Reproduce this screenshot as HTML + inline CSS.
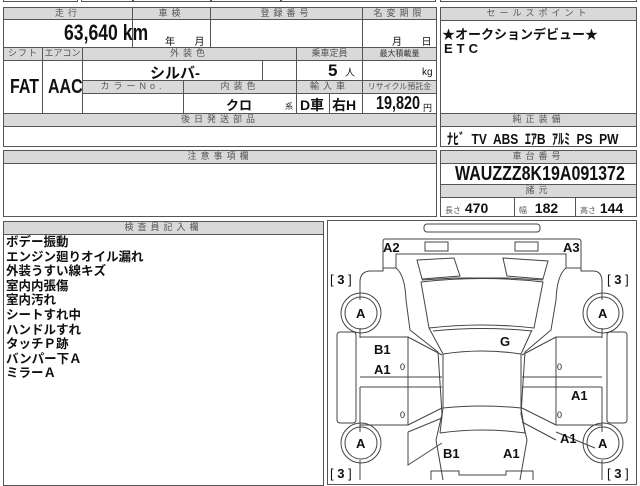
<!DOCTYPE html>
<html><head><meta charset="utf-8"><style>
*{margin:0;padding:0;box-sizing:border-box}
body{width:640px;height:480px;background:#fff;position:relative;overflow:hidden;font-family:"Liberation Sans","Noto Sans CJK JP",sans-serif;color:#111}
.b{position:absolute;border:1px solid #555;background:#fff}
.h{position:absolute;background:#d9d9d9;border:1px solid #555;font-size:9px;color:#555;text-align:center;letter-spacing:4px;line-height:11px;white-space:nowrap;overflow:hidden}
.t{position:absolute;white-space:nowrap;font-weight:bold}
.n{display:inline-block;transform:scaleX(.8);transform-origin:left}
</style></head><body>
<div class="b" style="left:3px;top:-6px;width:75px;height:8px"></div>
<div class="b" style="left:81px;top:-6px;width:52px;height:8px"></div>
<div class="b" style="left:133px;top:-6px;width:78px;height:8px"></div>
<div class="b" style="left:211px;top:-6px;width:70px;height:8px"></div>
<div class="b" style="left:281px;top:-6px;width:155px;height:8px"></div>
<div class="b" style="left:440px;top:-6px;width:197px;height:8px"></div>

<div class="b" style="left:3px;top:7px;width:434px;height:140px"></div>
<div class="h" style="left:3px;top:7px;width:130px;height:13px">走行</div>
<div class="h" style="left:132px;top:7px;width:79px;height:13px">車検</div>
<div class="h" style="left:210px;top:7px;width:153px;height:13px">登録番号</div>
<div class="h" style="left:362px;top:7px;width:75px;height:13px">名変期限</div>
<div class="b" style="left:132px;top:19px;width:79px;height:29px;background:none"></div>
<div class="b" style="left:210px;top:19px;width:153px;height:29px;background:none"></div>
<div class="t" style="left:64px;top:20px;font-size:22px"><span class="n">63,640 km</span></div>
<div class="t" style="left:165px;top:33px;font-size:10px;font-weight:normal">年&nbsp;&nbsp;&nbsp;&nbsp;&nbsp;&nbsp;&nbsp;月</div>
<div class="t" style="left:392px;top:33px;font-size:10px;font-weight:normal">月&nbsp;&nbsp;&nbsp;&nbsp;&nbsp;&nbsp;&nbsp;日</div>

<div class="h" style="left:3px;top:47px;width:40px;height:14px;letter-spacing:1px">シフト</div>
<div class="h" style="left:42px;top:47px;width:41px;height:14px;letter-spacing:0">エアコン</div>
<div class="h" style="left:82px;top:47px;width:215px;height:14px">外装色</div>
<div class="h" style="left:296px;top:47px;width:67px;height:14px;letter-spacing:0">乗車定員</div>
<div class="h" style="left:362px;top:47px;width:75px;height:14px;letter-spacing:0;font-size:8px;color:#333">最大積載量</div>
<div class="b" style="left:3px;top:60px;width:40px;height:54px;background:none"></div>
<div class="b" style="left:42px;top:60px;width:41px;height:54px;background:none"></div>
<div class="t" style="left:10px;top:76px;font-size:20px"><span class="n">FAT</span></div>
<div class="t" style="left:48px;top:76px;font-size:20px"><span class="n">AAC</span></div>
<div class="b" style="left:262px;top:60px;width:35px;height:21px;background:none"></div>
<div class="b" style="left:296px;top:60px;width:67px;height:21px;background:none"></div>
<div class="t" style="left:150px;top:62px;font-size:15px">シルバ-</div>
<div class="t" style="left:328px;top:61px;font-size:17px">5 <span style="font-size:10px;font-weight:normal">&nbsp;人</span></div>
<div class="t" style="left:422px;top:67px;font-size:10px;font-weight:normal">kg</div>
<div class="h" style="left:82px;top:80px;width:102px;height:14px">カラーNo.</div>
<div class="h" style="left:183px;top:80px;width:114px;height:14px">内装色</div>
<div class="h" style="left:296px;top:80px;width:67px;height:14px">輸入車</div>
<div class="h" style="left:362px;top:80px;width:75px;height:14px;letter-spacing:0;font-size:8px">リサイクル預託金</div>
<div class="b" style="left:82px;top:93px;width:102px;height:21px;background:none"></div>
<div class="b" style="left:296px;top:93px;width:34px;height:21px;background:none"></div>
<div class="b" style="left:329px;top:93px;width:34px;height:21px;background:none"></div>
<div class="t" style="left:226px;top:95px;font-size:13px">クロ</div>
<div class="t" style="left:285px;top:101px;font-size:8px;font-weight:normal">系</div>
<div class="t" style="left:300px;top:95px;font-size:14px">D車</div>
<div class="t" style="left:332px;top:95px;font-size:14px">右H</div>
<div class="t" style="left:376px;top:93px;font-size:18px"><span class="n">19,820</span></div>
<div class="t" style="left:423px;top:101px;font-size:9px;font-weight:normal">円</div>
<div class="h" style="left:3px;top:113px;width:434px;height:14px">後日発送部品</div>

<div class="b" style="left:440px;top:7px;width:197px;height:140px"></div>
<div class="h" style="left:440px;top:7px;width:197px;height:14px">セールスポイント</div>
<div class="t" style="left:442px;top:24px;font-size:13px">★オークションデビュー★</div>
<div class="t" style="left:444px;top:41px;font-size:13px;letter-spacing:4px">ETC</div>
<div class="h" style="left:440px;top:113px;width:197px;height:14px">純正装備</div>
<div class="t" style="left:447px;top:128px;font-size:15px"><span class="n" style="word-spacing:4px">ﾅﾋﾞ TV ABS ｴｱB ｱﾙﾐ PS PW</span></div>

<div class="b" style="left:3px;top:150px;width:434px;height:67px"></div>
<div class="h" style="left:3px;top:150px;width:434px;height:14px">注意事項欄</div>
<div class="b" style="left:440px;top:150px;width:197px;height:67px"></div>
<div class="h" style="left:440px;top:150px;width:197px;height:14px">車台番号</div>
<div class="t" style="left:455px;top:163px;font-size:20px"><span class="n">WAUZZZ8K19A091372</span></div>
<div class="h" style="left:440px;top:184px;width:197px;height:14px">諸元</div>
<div class="b" style="left:514px;top:197px;width:62px;height:20px;background:none"></div>
<div class="t" style="left:445px;top:200px;font-size:14px"><span style="font-size:8px;font-weight:normal;color:#555">長さ</span> 470</div>
<div class="t" style="left:519px;top:200px;font-size:14px"><span style="font-size:8px;font-weight:normal;color:#555">幅</span> &nbsp;182</div>
<div class="t" style="left:580px;top:200px;font-size:14px"><span style="font-size:8px;font-weight:normal;color:#555">高さ</span> 144</div>

<div class="b" style="left:3px;top:221px;width:321px;height:265px"></div>
<div class="h" style="left:3px;top:221px;width:321px;height:14px">検査員記入欄</div>
<div style="position:absolute;left:6px;top:235px;font-size:12.5px;line-height:14.6px;font-weight:bold;color:#111">ボデー振動<br>エンジン廻りオイル漏れ<br>外装うすい線キズ<br>室内内張傷<br>室内汚れ<br>シートすれ中<br>ハンドルすれ<br>タッチＰ跡<br>バンパー下Ａ<br>ミラーＡ</div>

<div class="b" style="left:327px;top:220px;width:310px;height:265px"></div>
<svg style="position:absolute;left:0;top:0" width="640" height="480" fill="none" stroke="#444" stroke-width="1">
<rect x="424" y="224" width="116" height="8" rx="3"/>
<path d="M385 239H578Q581 239 581 242V268H566V254H396V268H383V242Q383 239 385 239Z"/>
<rect x="425" y="242" width="23" height="9"/><rect x="515" y="242" width="23" height="9"/>
<path d="M383 268V271H371Q360 271 360 282V300"/><path d="M581 268V271H593Q602 271 602 282V300"/>
<path d="M360 328V338"/><path d="M602 328V338"/>
<path d="M360 425V432"/><path d="M602 425V432"/>
<path d="M360 460V480"/><path d="M602 460V480"/>
<path d="M396 268Q405 275 406 300L410 330L438 352L442 414L436 440L443 480"/>
<path d="M566 268Q557 275 556 300L551 330L525 352L521 414L527 440L520 480"/>
<path d="M417 260L454 258L460 276L422 279Z"/><path d="M503 258L548 261L543 279L507 276Z"/>
<path d="M422 280L455 278H507L543 280"/>
<path d="M421 282Q482 275 543 282L534 328Q482 322 429 328Z"/>
<path d="M433 331Q482 326 532 331"/>
<path d="M443 354Q482 348 521 354V408Q482 404 443 408Z"/>
<path d="M443 354L429 328"/><path d="M521 354L532 330"/>
<path d="M440 433Q482 427 525 433"/><path d="M443 408L440 433"/><path d="M521 408L525 433"/>
<path d="M360 337H408V377H360"/><path d="M408 337L442 355"/>
<path d="M360 387H442"/><path d="M360 377H442"/>
<path d="M360 387V425H408V387"/><path d="M408 425L442 408"/>
<path d="M408 337V425"/>
<path d="M408 432V465L442 443"/><path d="M408 432L442 418"/>
<path d="M602 337H556V377H602"/><path d="M556 337L522 355"/>
<path d="M602 387H522"/><path d="M602 377H522"/>
<path d="M602 387V425H556V387"/><path d="M556 425L522 408"/>
<path d="M556 337V425"/>
<path d="M556 432L595 448"/><path d="M556 440L522 422"/>
<rect x="337" y="332" width="19" height="91" rx="3"/><rect x="607" y="332" width="20" height="91" rx="3"/>
<circle cx="361" cy="313" r="20"/><circle cx="361" cy="313" r="16"/>
<circle cx="603" cy="313" r="20"/><circle cx="603" cy="313" r="16"/>
<circle cx="361" cy="443" r="20"/><circle cx="361" cy="443" r="16"/>
<circle cx="603" cy="443" r="20"/><circle cx="603" cy="443" r="16"/>
<path d="M431 480V471H459V475H506V471H533V480"/>
</svg>
<div style="position:absolute;left:0;top:0;font-weight:bold;font-size:13px;color:#111">
<div class="t" style="left:383px;top:240px">A2</div>
<div class="t" style="left:563px;top:240px">A3</div>
<div class="t" style="left:330px;top:272px;font-weight:normal">[ <b>3</b> ]</div>
<div class="t" style="left:607px;top:272px;font-weight:normal">[ <b>3</b> ]</div>
<div class="t" style="left:330px;top:466px;font-weight:normal">[ <b>3</b> ]</div>
<div class="t" style="left:607px;top:466px;font-weight:normal">[ <b>3</b> ]</div>
<div class="t" style="left:356px;top:306px">A</div>
<div class="t" style="left:598px;top:306px">A</div>
<div class="t" style="left:356px;top:436px">A</div>
<div class="t" style="left:598px;top:436px">A</div>
<div class="t" style="left:374px;top:342px">B1</div>
<div class="t" style="left:374px;top:362px">A1</div>
<div class="t" style="left:500px;top:334px">G</div>
<div class="t" style="left:571px;top:388px">A1</div>
<div class="t" style="left:560px;top:431px">A1</div>
<div class="t" style="left:443px;top:446px">B1</div>
<div class="t" style="left:503px;top:446px">A1</div>
<div class="t" style="left:400px;top:362px;font-size:9px;font-weight:normal">0</div>
<div class="t" style="left:400px;top:410px;font-size:9px;font-weight:normal">0</div>
<div class="t" style="left:557px;top:362px;font-size:9px;font-weight:normal">0</div>
<div class="t" style="left:557px;top:410px;font-size:9px;font-weight:normal">0</div>
</div>
</body></html>
